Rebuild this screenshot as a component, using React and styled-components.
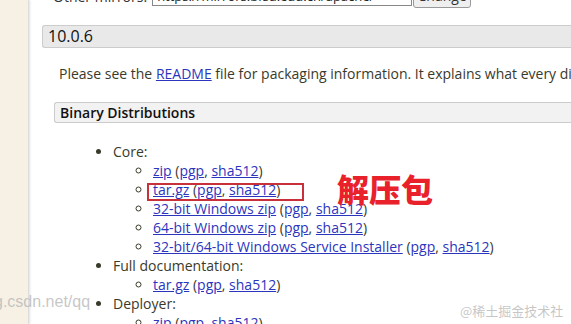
import React from "react";
import styled, { createGlobalStyle } from "styled-components";

const Global = createGlobalStyle`
  html, body { margin: 0; padding: 0; background: #fff; }
  body {
    font-family: "Open Sans", "Noto Sans", sans-serif;
    font-size: 14px;
    color: #333;
    overflow: hidden;
  }
`;

const Page = styled.div`
  position: relative;
  display: flex;
  width: 571px;
  height: 324px;
  overflow: hidden;
`;

const Sidebar = styled.div`
  flex: 0 0 28px;
  background: #f6f1e4;
  border-right: 1px solid #ddd;
  box-shadow: 1px 0 2px rgba(0, 0, 0, 0.12);
`;

const Main = styled.div`
  flex: 1;
  min-width: 0;
  padding-left: 13px;
  white-space: nowrap;
`;

const MirrorRow = styled.div`
  display: flex;
  align-items: flex-end;
  gap: 1px;
  height: 8px;
  padding-left: 11px;
  margin-bottom: 17px;
`;

const MirrorLabel = styled.span`
  flex: none;
  line-height: 19px;
  margin-right: 4px;
  margin-bottom: 2px;
`;

const MirrorInput = styled.div`
  flex: none;
  width: 254px;
  height: 20px;
  border: 1px solid #888;
  margin-bottom: 2px;
  font-size: 13px;
  line-height: 22px;
  padding-left: 4px;
  color: #222;
`;

const ChangeButton = styled.div`
  flex: none;
  width: 56px;
  height: 22px;
  border: 1px solid #999;
  border-radius: 3px;
  background: #efefef;
  text-align: center;
  line-height: 22px;
`;

const VersionHead = styled.h3`
  margin: 0;
  height: 21px;
  line-height: 21px;
  background: #e9e9e9;
  border: 1px solid #ccc;
  border-right: none;
  border-radius: 3px 0 0 3px;
  padding-left: 5px;
  font-size: 16px;
  font-weight: 500;
  color: #111;
`;

const Section = styled.div`
  padding-left: 12px;
`;

const Para = styled.p`
  margin: 16px 0 0 5px;
  line-height: 19px;
  color: #3a3a2a;
`;

const SubHead = styled.h4`
  margin: 19px 0 0 0;
  height: 19px;
  line-height: 19px;
  background: #f2f2f2;
  border: 1px solid #ccc;
  border-right: none;
  border-radius: 3px 0 0 3px;
  padding-left: 5px;
  font-size: 14px;
  font-weight: 600;
  color: #111;
`;

const List = styled.ul`
  margin: 19px 0 0 0;
  padding-left: 59px;
  list-style: ${(p) => (p.$sub ? "circle" : "disc")};
  line-height: 19px;
  color: #3a3a2a;

  & & {
    margin: 0;
    padding-left: 40px;
  }
`;

const Link = styled.a`
  color: #2c35bd;
  text-decoration: underline;
`;

const Highlight = styled.div`
  position: absolute;
  left: 147px;
  top: 183px;
  width: 153px;
  height: 14px;
  border: 2px solid #c9313a;
`;

const Note = styled.div`
  position: absolute;
  left: 337px;
  top: 168px;
  font-family: "Noto Sans CJK SC", sans-serif;
  font-weight: 900;
  font-size: 32px;
  line-height: 40px;
  color: #e8212b;
`;

const Watermark = styled.div`
  position: absolute;
  color: rgba(180, 180, 180, 0.75);
  font-family: ${(p) => (p.$cjk ? '"Noto Sans CJK SC", sans-serif' : '"Liberation Sans", sans-serif')};
  font-size: ${(p) => p.$size}px;
  left: ${(p) => p.$x}px;
  top: ${(p) => p.$y}px;
`;

const Item = ({ name }) => (
  <li>
    <Link>{name}</Link> (<Link>pgp</Link>, <Link>sha512</Link>)
  </li>
);

export default function App() {
  return (
    <>
      <Global />
      <Page>
        <Sidebar />
        <Main>
          <MirrorRow>
            <MirrorLabel>Other mirrors:</MirrorLabel>
            <MirrorInput>https://mirrors.bfsu.edu.cn/apache/</MirrorInput>
            <ChangeButton>Change</ChangeButton>
          </MirrorRow>
          <VersionHead>10.0.6</VersionHead>
          <Section>
            <Para>
              Please see the <Link>README</Link> file for packaging information. It explains what every distribution contains.
            </Para>
            <SubHead>Binary Distributions</SubHead>
            <List>
              <li>
                Core:
                <List $sub>
                  <Item name="zip" />
                  <Item name="tar.gz" />
                  <Item name="32-bit Windows zip" />
                  <Item name="64-bit Windows zip" />
                  <Item name="32-bit/64-bit Windows Service Installer" />
                </List>
              </li>
              <li>
                Full documentation:
                <List $sub>
                  <Item name="tar.gz" />
                </List>
              </li>
              <li>
                Deployer:
                <List $sub>
                  <Item name="zip" />
                </List>
              </li>
            </List>
          </Section>
        </Main>
        <Highlight />
        <Note>解压包</Note>
        <Watermark $x={-6} $y={293} $size={16}>g.csdn.net/qq</Watermark>
        <Watermark $cjk $x={460} $y={301} $size={13}>@稀土掘金技术社区</Watermark>
      </Page>
    </>
  );
}
